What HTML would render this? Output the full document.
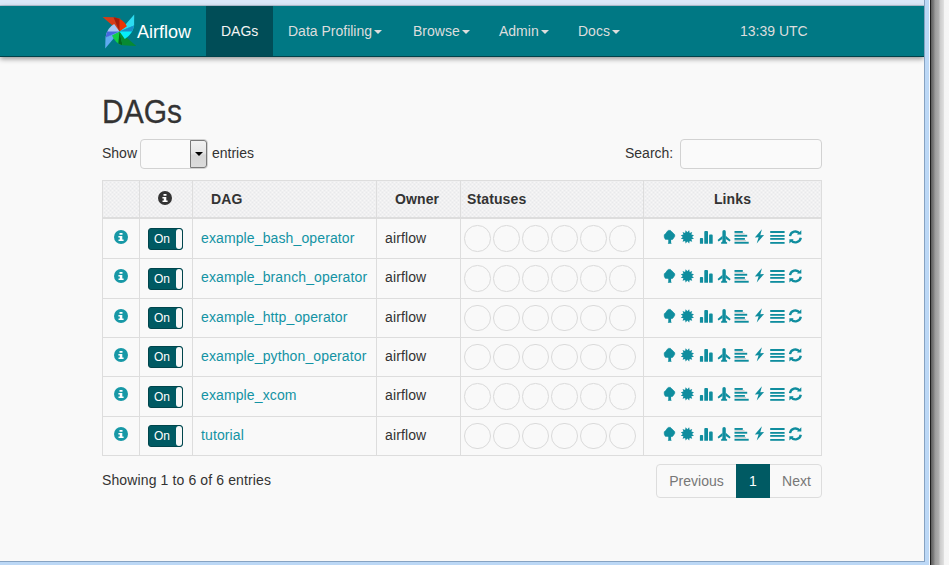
<!DOCTYPE html>
<html><head><meta charset="utf-8">
<style>
*{box-sizing:border-box;margin:0;padding:0}
html,body{width:949px;height:565px;overflow:hidden;background:#f0f0f0;font-family:"Liberation Sans",sans-serif;font-size:14px;color:#333}
#win{position:absolute;left:0;top:0;width:924px;height:561px;background:#f9f9f9;overflow:hidden}
#topstrip{position:absolute;left:0;top:0;width:924px;height:6px;background:#dbe8f8;border-bottom:1px solid #b8c6d8}
#nav{position:absolute;left:0;top:6px;width:924px;height:51px;background:#007884;border-bottom:1px solid #00424a;box-shadow:0 2px 5px rgba(0,0,0,.4)}
#nav .brand{position:absolute;left:100px;top:6px}
#nav .brandtxt{position:absolute;left:137px;top:16px;font-size:18px;color:#fff}
#nav .item{position:absolute;top:0;height:50px;line-height:50px;color:#ddd;font-size:14px;white-space:nowrap}
#nav .active{background:#004d57;color:#f4f4f4}
.caret{display:inline-block;width:0;height:0;margin-left:2px;vertical-align:middle;border-top:4px solid #ddd;border-left:4px solid transparent;border-right:4px solid transparent}
#rframe{position:absolute;left:924px;top:0;width:6px;height:565px;background:linear-gradient(to right,#87a3c2 0,#87a3c2 1px,#bcd8f6 1px,#bcd8f6 5px,#f4f9ff 5px)}
#rshadow{position:absolute;left:930px;top:0;width:19px;height:565px;background:linear-gradient(to right,#1e1e1e 0,#1e1e1e 1px,#5c5c5c 1px,#838383 4px,#9c9c9c 5px,#b0b0b0 9px,#cacaca 10px,#dadada 13px,#e2e2e2 14px,#f4f4f4 14px,#f6f6f6 19px)}
#bframe{position:absolute;left:0;top:561px;width:929px;height:4px;background:#bcd8f6}
#bline{position:absolute;left:0;top:561px;width:925px;height:1px;background:#87a3c2}
h2{position:absolute;left:102px;top:94px;font-size:30px;font-weight:normal;color:#333;line-height:36px;transform:scaleY(1.1);transform-origin:0 17.6px;-webkit-text-stroke:0.25px #333}
.lbl{position:absolute;font-size:14px;color:#333;line-height:20px}
#sel{position:absolute;left:140px;top:139px;width:68px;height:30px;border:1px solid #d2d2d2;border-radius:4px;background:#fafafa}
#sel .btn{position:absolute;right:0;top:0;width:17px;height:28px;background:linear-gradient(#f2f2f2,#e6e6e6 45%,#d6d6d6 55%,#dcdcdc);border:1px solid #7a7a7a;border-radius:0 3px 3px 0}
#sel .btn:after{content:"";position:absolute;left:3.5px;top:11px;border-top:4px solid #000;border-left:4px solid transparent;border-right:4px solid transparent}
#search{position:absolute;left:680px;top:139px;width:142px;height:30px;border:1px solid #d2d2d2;border-radius:4px;background:#fafafa}
table{position:absolute;left:102px;top:180px;border-collapse:collapse;table-layout:fixed;width:720px}
td,th{letter-spacing:0.12px;border:1px solid #ddd;padding:0 8px;vertical-align:middle;white-space:nowrap;line-height:20px}
th{background-color:#f7f7f7;background-image:repeating-conic-gradient(#e8e9eb 0 25%,transparent 0 50%);background-size:4px 4px;font-weight:bold;color:#333;height:37px;border-bottom:2px solid #ddd}
td.c1,td.c2,td.c6{text-align:center;padding:0}
td.c5{padding:0 3px}
td.c3,td.c4{padding-bottom:3px}
tr.r1 td.c3,tr.r1 td.c4{padding-bottom:1px}
a{color:#1393a4;text-decoration:none}
.abs{position:absolute}
.tog{display:block;position:absolute;width:35px;height:22px;background:#005a63;border:1px solid #00454c;border-radius:3px;color:#fff;font-size:12px;line-height:20px;padding-left:5px;text-align:left;letter-spacing:0}
.tog:after{content:"";position:absolute;right:0;top:0;width:6px;height:20px;background:#f8f8f8;border-radius:3px}
.circ{display:inline-block;width:26.5px;height:26.5px;border:1px solid #dadada;border-radius:50%;margin-right:2.5px;vertical-align:middle}
#showing{position:absolute;left:102px;top:470px;letter-spacing:0.12px}
#pag{position:absolute;left:656px;top:464px;width:166px;height:34px;border:1px solid #ddd;border-radius:4px}
#pag div{position:absolute;top:-1px;height:34px;line-height:34px;color:#777;text-align:center}
#pag .cur{background:#005a63;color:#fff}
</style></head><body>
<svg width="0" height="0" style="position:absolute"><defs><g id="lk" fill="#0f8d9e">
<path d="M8.5 2.4 L10.4 2.4 L11.7 3.7 L13.3 5.2 L14.7 6.8 L14.7 8.3 L13.5 10.2 L12.4 11.5 L5.3 11.3 L4.3 9.2 L4.3 6.8 L5.9 5.5 L7.2 3.4 Z" stroke="#0f8d9e" stroke-width="0.7" stroke-linejoin="round"/>
<path d="M8.3 10.5 H11.1 V14.6 L11.6 15.8 H7.8 L8.3 14.6Z"/>
<polygon points="29.16,2.33 29.70,4.92 32.21,4.09 31.38,6.60 33.97,7.14 32.00,8.90 33.97,10.66 31.38,11.20 32.21,13.71 29.70,12.88 29.16,15.47 27.40,13.50 25.64,15.47 25.10,12.88 22.59,13.71 23.42,11.20 20.83,10.66 22.80,8.90 20.83,7.14 23.42,6.60 22.59,4.09 25.10,4.92 25.64,2.33 27.40,4.30"/>
<path d="M39.9 15.7V10.7Q39.9 9.9 40.7 9.9H42.3Q43.1 9.9 43.1 10.7V15.7Z M44.3 15.7V3.9Q44.3 3 45.2 3H47.1Q48 3 48 3.9V15.7Z M49.1 15.7V7.5Q49.1 6.6 50 6.6H51.8Q52.7 6.6 52.7 7.5V15.7Z"/>
<path d="M62.4 15 V3.8 A1.7 1.7 0 0 1 65.8 3.8 V15Z"/>
<polygon points="62.5,7.8 57.6,11.9 58.5,13.4 62.5,11"/><polygon points="65.7,7.8 70.6,11.9 69.7,13.4 65.7,11"/>
<polygon points="62.4,13.4 61.1,14.4 61.1,15.7 67.1,15.7 67.1,14.4 65.8,13.4"/>
<rect x="74.5" y="3.0" width="8.3" height="1.9"/><rect x="74.5" y="6.8" width="12.7" height="1.9"/><rect x="74.5" y="10" width="10.4" height="1.8"/><rect x="74.5" y="13.8" width="14.2" height="1.9"/>
<rect x="74.5" y="5.2" width="10" height="1.3" fill="#c8cccc"/><rect x="74.5" y="12.1" width="11.5" height="1.3" fill="#c8cccc"/>
<polygon points="101.9,1.3 94.8,9.6 98.6,9.3 96.7,15.6 104.1,7.0 100.3,7.3"/>
<rect x="110.2" y="3.0" width="14.4" height="2"/><rect x="110.2" y="7.0" width="14.4" height="1.8"/><rect x="110.2" y="10" width="14.4" height="1.8"/><rect x="110.2" y="14" width="14.4" height="1.8"/>
<path d="M130 8.1 A5.5 5.5 0 0 1 139.7 5.6" fill="none" stroke="#0f8d9e" stroke-width="2.3"/>
<polygon points="141.3,2.2 141.3,6.5 137,6.5"/>
<path d="M140.8 9.8 A5.5 5.5 0 0 1 131.1 12.3" fill="none" stroke="#0f8d9e" stroke-width="2.3"/>
<polygon points="129.4,11.2 129.4,15.6 133.7,11.2"/>
</g></defs></svg>
<div id="win">
<div id="topstrip"></div>
<div id="nav">
 <svg class="brand" width="36" height="38" viewBox="100 12 36 38"><polygon points="102.6,17.0 113.6,17.3 119.5,31.4" fill="#d63c16"/><polygon points="134.2,14.6 134.1,25.6 119.5,31.4" fill="#2cdcf0"/><polygon points="136.3,46.0 122.5,45.3 119.5,31.4" fill="#078a32"/><polygon points="105.2,48.4 105.5,37.6 119.5,31.4" fill="#5eaaf0"/><path d="M113.6,17.3 Q123.0,18.5 126.9,26.2 L119.5,31.4Z" fill="#ea3404"/><path d="M113.6,17.3 Q115.2,17.5 119.5,18.9 L119.5,31.4Z" fill="#a31c0a"/><path d="M134.1,25.6 Q132.4,34.9 124.8,38.9 L119.5,31.4Z" fill="#06eef8"/><path d="M134.1,25.6 Q133.8,27.2 132.2,31.5 L119.5,31.4Z" fill="#1a8cc6"/><path d="M122.5,45.3 Q116.0,44.3 112.0,35.5 L119.5,31.4Z" fill="#12ce46"/><path d="M122.5,45.3 Q121.4,45.1 118.3,43.6 L119.5,31.4Z" fill="#05661e"/><path d="M105.5,37.6 Q106.6,27.9 114.2,23.9 L119.5,31.4Z" fill="#a6c6f2"/><path d="M105.5,37.6 Q105.7,35.9 107.1,31.5 L119.5,31.4Z" fill="#4668e0"/></svg>
 <div class="brandtxt">Airflow</div>
 <div class="item active" style="left:206px;width:67px;padding-left:15px">DAGs</div>
 <div class="item" style="left:288px">Data Profiling<span class="caret"></span></div>
 <div class="item" style="left:413px">Browse<span class="caret"></span></div>
 <div class="item" style="left:499px">Admin<span class="caret"></span></div>
 <div class="item" style="left:578px">Docs<span class="caret"></span></div>
 <div class="item" style="left:740px">13:39 UTC</div>
</div>
<h2>DAGs</h2>
<div class="lbl" style="left:102px;top:143px">Show</div>
<div id="sel"><div class="btn"></div></div>
<div class="lbl" style="left:212px;top:143px">entries</div>
<div class="lbl" style="left:625px;top:143px">Search:</div>
<div id="search"></div>
<table>
<colgroup><col style="width:37px"><col style="width:53px"><col style="width:184px"><col style="width:84px"><col style="width:183px"><col style="width:178px"></colgroup>
<tr><th></th><th style="text-align:center;padding:0"></th><th style="padding-left:18px;text-align:left">DAG</th><th style="text-align:left;padding-left:18px">Owner</th><th style="padding-left:6px;text-align:left">Statuses</th><th style="text-align:center">Links</th></tr>
<tr class="r1" style="height:41px"><td></td><td></td><td class="c3"><a>example_bash_operator</a></td><td class="c4">airflow</td><td class="c5"><span class="circ"></span><span class="circ"></span><span class="circ"></span><span class="circ"></span><span class="circ"></span><span class="circ"></span></td><td></td></tr>
<tr class="r2" style="height:40px"><td></td><td></td><td class="c3"><a>example_branch_operator</a></td><td class="c4">airflow</td><td class="c5"><span class="circ"></span><span class="circ"></span><span class="circ"></span><span class="circ"></span><span class="circ"></span><span class="circ"></span></td><td></td></tr>
<tr class="r3" style="height:39px"><td></td><td></td><td class="c3"><a>example_http_operator</a></td><td class="c4">airflow</td><td class="c5"><span class="circ"></span><span class="circ"></span><span class="circ"></span><span class="circ"></span><span class="circ"></span><span class="circ"></span></td><td></td></tr>
<tr class="r4" style="height:39px"><td></td><td></td><td class="c3"><a>example_python_operator</a></td><td class="c4">airflow</td><td class="c5"><span class="circ"></span><span class="circ"></span><span class="circ"></span><span class="circ"></span><span class="circ"></span><span class="circ"></span></td><td></td></tr>
<tr class="r5" style="height:40px"><td></td><td></td><td class="c3"><a>example_xcom</a></td><td class="c4">airflow</td><td class="c5"><span class="circ"></span><span class="circ"></span><span class="circ"></span><span class="circ"></span><span class="circ"></span><span class="circ"></span></td><td></td></tr>
<tr class="r6" style="height:39px"><td></td><td></td><td class="c3"><a>tutorial</a></td><td class="c4">airflow</td><td class="c5"><span class="circ"></span><span class="circ"></span><span class="circ"></span><span class="circ"></span><span class="circ"></span><span class="circ"></span></td><td></td></tr>
</table>
<div id="showing" class="lbl">Showing 1 to 6 of 6 entries</div>
<svg class="abs" style="left:113px;top:229px" width="16" height="16" viewBox="0 0 16 16"><circle cx="8" cy="8" r="7" fill="#1798a6"/><path fill="#fff" d="M6.5 3.9000000000000004h3v1.9h-3z M5.4 7.1H9.3V10.4H10.6V12H5.5V10.4H6.8V8.6H5.4z"/></svg>
<div class="tog" style="left:148px;top:228px">On</div>
<svg class="abs" style="left:660px;top:228px" width="145" height="17" viewBox="0 0 145 17"><use href="#lk"/></svg>
<svg class="abs" style="left:113px;top:268px" width="16" height="16" viewBox="0 0 16 16"><circle cx="8" cy="8" r="7" fill="#1798a6"/><path fill="#fff" d="M6.5 3.9000000000000004h3v1.9h-3z M5.4 7.1H9.3V10.4H10.6V12H5.5V10.4H6.8V8.6H5.4z"/></svg>
<div class="tog" style="left:148px;top:268px">On</div>
<svg class="abs" style="left:660px;top:267px" width="145" height="17" viewBox="0 0 145 17"><use href="#lk"/></svg>
<svg class="abs" style="left:113px;top:308px" width="16" height="16" viewBox="0 0 16 16"><circle cx="8" cy="8" r="7" fill="#1798a6"/><path fill="#fff" d="M6.5 3.9000000000000004h3v1.9h-3z M5.4 7.1H9.3V10.4H10.6V12H5.5V10.4H6.8V8.6H5.4z"/></svg>
<div class="tog" style="left:148px;top:307px">On</div>
<svg class="abs" style="left:660px;top:307px" width="145" height="17" viewBox="0 0 145 17"><use href="#lk"/></svg>
<svg class="abs" style="left:113px;top:347px" width="16" height="16" viewBox="0 0 16 16"><circle cx="8" cy="8" r="7" fill="#1798a6"/><path fill="#fff" d="M6.5 3.9000000000000004h3v1.9h-3z M5.4 7.1H9.3V10.4H10.6V12H5.5V10.4H6.8V8.6H5.4z"/></svg>
<div class="tog" style="left:148px;top:346px">On</div>
<svg class="abs" style="left:660px;top:346px" width="145" height="17" viewBox="0 0 145 17"><use href="#lk"/></svg>
<svg class="abs" style="left:113px;top:386px" width="16" height="16" viewBox="0 0 16 16"><circle cx="8" cy="8" r="7" fill="#1798a6"/><path fill="#fff" d="M6.5 3.9000000000000004h3v1.9h-3z M5.4 7.1H9.3V10.4H10.6V12H5.5V10.4H6.8V8.6H5.4z"/></svg>
<div class="tog" style="left:148px;top:386px">On</div>
<svg class="abs" style="left:660px;top:385px" width="145" height="17" viewBox="0 0 145 17"><use href="#lk"/></svg>
<svg class="abs" style="left:113px;top:426px" width="16" height="16" viewBox="0 0 16 16"><circle cx="8" cy="8" r="7" fill="#1798a6"/><path fill="#fff" d="M6.5 3.9000000000000004h3v1.9h-3z M5.4 7.1H9.3V10.4H10.6V12H5.5V10.4H6.8V8.6H5.4z"/></svg>
<div class="tog" style="left:148px;top:425px">On</div>
<svg class="abs" style="left:660px;top:425px" width="145" height="17" viewBox="0 0 145 17"><use href="#lk"/></svg>
<svg class="abs" style="left:157px;top:190px" width="16" height="16" viewBox="0 0 16 16"><circle cx="8" cy="8" r="7" fill="#333"/><path fill="#fff" d="M6.5 3.9000000000000004h3v1.9h-3z M5.4 7.1H9.3V10.4H10.6V12H5.5V10.4H6.8V8.6H5.4z"/></svg>
<div id="pag"><div style="left:-1px;width:81px">Previous</div><div class="cur" style="left:79px;width:34px">1</div><div style="left:113px;width:53px">Next</div></div>
</div>
<div id="rframe"></div>
<div id="rshadow"></div>
<div id="bframe"></div><div id="bline"></div>
</body></html>
